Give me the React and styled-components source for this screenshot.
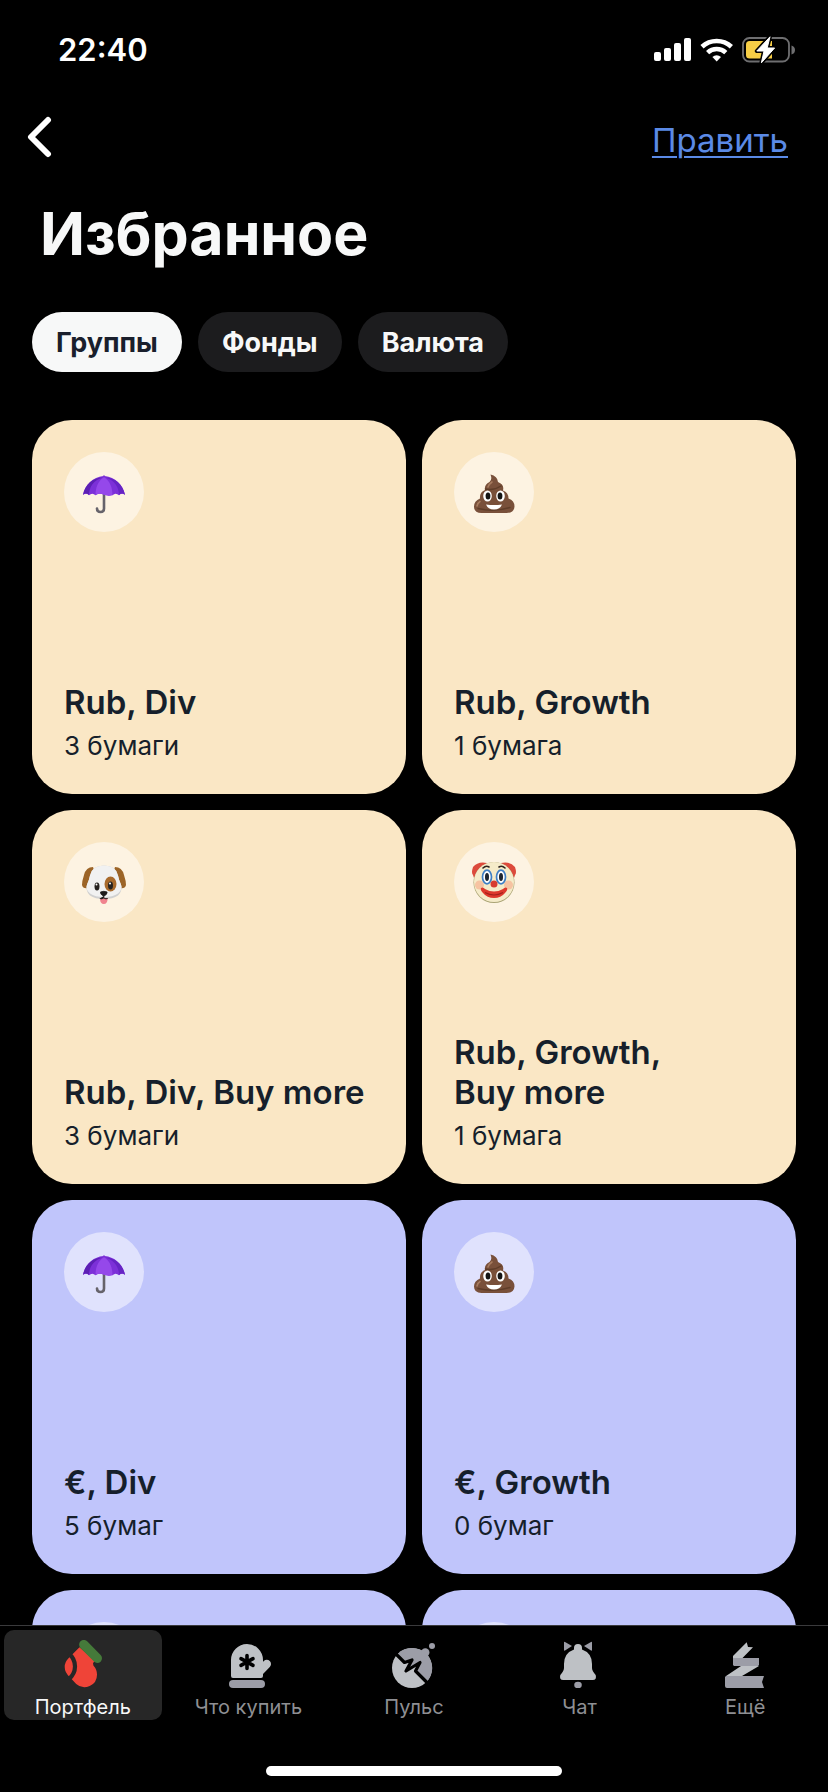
import React, { useState } from 'react'
import styled, { createGlobalStyle } from 'styled-components'

const GlobalStyle = createGlobalStyle`
    * {
        box-sizing: border-box;
    }

    body {
        margin: 0;
        background: #000;
        color: #f7f8f8;
        font-family: Inter, 'Noto Sans', sans-serif;
    }

    button {
        font-family: inherit;
        border: 0;
        padding: 0;
        cursor: pointer;
    }
`;

const Screen = styled.div`
    height: 100vh;
    display: flex;
    flex-direction: column;
    overflow: hidden;
`;

const StatusBar = styled.div`
    height: 88px;
    flex: none;
    display: flex;
    justify-content: space-between;
    padding: 30px 32px 0 58px;
`;

const Time = styled.time`
    font-size: 31px;
    line-height: 40px;
    font-weight: 600;
    color: #fff;
`;

const StatusIcons = styled.div`
    height: 40px;
    display: flex;
    align-items: center;
    gap: 8px;
`;

const NavBar = styled.nav`
    height: 104px;
    flex: none;
    display: flex;
    justify-content: space-between;
    align-items: flex-start;
    padding: 28px 40px 0 24px;
`;

const BackButton = styled.button`
    width: 32px;
    height: 44px;
    background: none;
`;

const EditLink = styled.a`
    font-size: 33px;
    line-height: 48px;
    color: #5b8ae6;
    text-decoration: underline;
    text-decoration-thickness: 2px;
    text-underline-offset: 4px;
`;

const Title = styled.h1`
    flex: none;
    margin: 0;
    padding: 6px 40px 0;
    font-size: 59px;
    line-height: 72px;
    font-weight: 700;
`;

const Chips = styled.div`
    flex: none;
    display: flex;
    gap: 16px;
    padding: 42px 32px 48px;
`;

const Chip = styled.button`
    height: 60px;
    padding: 0 24px;
    border-radius: 30px;
    font-size: 27px;
    font-weight: 700;
    color: ${({ $active }) => ($active ? '#1a1f2c' : '#f7f8f8')};
    background: ${({ $active }) => ($active ? '#f7f8f8' : '#1c1c1e')};
`;

const Scroll = styled.main`
    flex: 1;
    min-height: 0;
    overflow: hidden;
`;

const Grid = styled.div`
    display: grid;
    grid-template-columns: 1fr 1fr;
    gap: 16px;
    padding: 0 32px;
`;

const Card = styled.article`
    aspect-ratio: 1;
    display: flex;
    flex-direction: column;
    justify-content: space-between;
    padding: 32px;
    border-radius: 40px;
    color: #161f2b;
    background: ${({ $color }) => $color};
`;

const Badge = styled.div`
    width: 80px;
    height: 80px;
    padding-top: 4px;
    display: flex;
    align-items: center;
    justify-content: center;
    border-radius: 50%;
    background: rgba(255, 255, 255, 0.5);
`;

const CardTitle = styled.h2`
    margin: 0 0 8px;
    font-size: 33px;
    line-height: 40px;
    font-weight: 600;
`;

const CardText = styled.p`
    margin: 0;
    font-size: 26px;
    line-height: 32px;
`;

const TabBar = styled.footer`
    flex: none;
    border-top: 1px solid #3a3a3c;
    padding: 4px 0 16px;
`;

const Tabs = styled.div`
    display: grid;
    grid-template-columns: repeat(5, 1fr);
`;

const Tab = styled.button`
    height: 90px;
    margin: 0 4px;
    padding: 10px 0 0;
    display: flex;
    flex-direction: column;
    align-items: center;
    border-radius: 10px;
    color: ${({ $active }) => ($active ? '#f7f8f8' : '#8e8f93')};
    background: ${({ $active }) => ($active ? '#272727' : 'none')};
`;

const TabLabel = styled.span`
    margin-top: 8px;
    font-size: 20px;
    line-height: 22px;
`;

const HomeIndicator = styled.div`
    width: 296px;
    height: 10px;
    margin: 46px auto 0;
    border-radius: 5px;
    background: #fff;
`;

const Signal = () => (
    <svg width="38" height="24" viewBox="0 0 38 24" fill="#fff">
        <rect x="0" y="14" width="7" height="9" rx="2" />
        <rect x="10" y="10" width="7" height="13" rx="2" />
        <rect x="20" y="5" width="7" height="18" rx="2" />
        <rect x="30" y="0" width="7" height="23" rx="2" />
    </svg>
)

const Wifi = () => (
    <svg width="34" height="24" viewBox="0 0 34 24" fill="none" stroke="#fff" strokeWidth="4.6">
        <path d="M2 8.8a21.6 21.6 0 0 1 29.4 0" />
        <path d="M7.6 14.6a13.4 13.4 0 0 1 18.2 0" />
        <path d="M16.7 23.4 12.4 19a6.4 6.4 0 0 1 8.6 0z" fill="#fff" stroke="none" />
    </svg>
)

const Battery = () => (
    <svg width="54" height="28" viewBox="0 0 54 28">
        <rect x="1" y="2" width="46" height="23.5" rx="6.5" fill="none" stroke="#6e6e70" strokeWidth="1.8" />
        <path d="M49.5 9.5q3.5 1 3.5 4.5t-3.5 4.5z" fill="#6e6e70" />
        <path d="M7.5 5H30v17.5H7.5Q4 22.5 4 19V8.5Q4 5 7.5 5z" fill="#f7ce46" />
        <path d="M28 .8 14.800 15h7.200l-2.600 11.800L32.600 12h-7.400z" fill="#fff" stroke="#000" strokeWidth="4" strokeLinejoin="round" />
        <path d="M28 .8 14.800 15h7.200l-2.600 11.800L32.600 12h-7.400z" fill="#fff" stroke="#fff" strokeLinejoin="round" />
    </svg>
)

const Umbrella = () => (
    <svg width="48" height="48" viewBox="0 0 48 48">
        <path d="M24 22v16.500q0 3.500-3.400 3.500-3.600 0-3.600-3.500" fill="none" stroke="#66636b" strokeWidth="2.600" strokeLinecap="round" />
        <path d="M23.300 6q.7-2 1.400 0C35 7 43 14.500 45 25q-3-2.600-6 .2-3.400-3-6.500 0-4-2.500-8.500-.4-4.500-2.100-8.500.4-3.100-3-6.500 0-3-2.800-6-.2C5 14.500 13 7 23.300 6z" fill="#7c30d8" />
        <path d="M23.500 7.500C18 11 15.500 18 15.500 25.200q4-2.500 8.500-.4 4.500 2.100 8.500.4C32.500 18 30 11 24.500 7.500z" fill="#9548ea" />
        <path d="M23 7.500C13 10 9 18 9 25q-3-2.800-6-.2C5 14.500 13 7.500 23 7.500z" fill="#5c1fb4" />
        <path d="M25 7.500C35 10 39 18 39 25q3-2.800 6-.2C43 14.500 35 7.500 25 7.500z" fill="#6624c4" />
    </svg>
)

const Poop = () => (
    <svg width="48" height="48" viewBox="0 0 48 48">
        <path d="M20.500 4.500q7 1.500 7.500 7.500 6.500 2.500 5 8.500 5.500 2 5.500 8 6 2 6 8-.5 6.500-8 6.500H11.500q-7.500 0-7.500-6.500 0-5.500 6-8-.5-6.500 5-8.500-1-5.500 4.500-8 3-2 1-7.500z" fill="#79503a" />
        <path d="M15.500 19q8 2 15.500-3M8 38.500q16 4 32-1" fill="none" stroke="#5f3d29" strokeWidth="1.400" strokeLinecap="round" />
        <path d="M22 12q-3 2-4 5M7 36q.5-3 3-4.500" fill="none" stroke="#a77b5e" strokeWidth="1.600" strokeLinecap="round" />
        <ellipse cx="17.500" cy="26" rx="4.300" ry="5.500" fill="#fff" />
        <ellipse cx="30.500" cy="26" rx="4.300" ry="5.500" fill="#fff" />
        <ellipse cx="18" cy="26" rx="2.400" ry="3.500" fill="#141414" />
        <ellipse cx="30" cy="26" rx="2.400" ry="3.500" fill="#141414" />
        <path d="M16 34.500q8 1.200 16 0-2 5-8 5t-8-5z" fill="#fff" />
    </svg>
)

const Dog = () => (
    <svg width="48" height="48" viewBox="0 0 48 48">
        <path d="M13 7Q6 7 4 15q-2 6-2 10 1 4 6 3 5-3 7-15zM35 7q7 0 9 8 2 6 2 10-1 4-6 3-5-3-7-15z" fill="#9c6427" />
        <path d="M24 5.500q12 0 14 10 1 5 3 9 2 6-3 11-5 3.500-14 3.500t-14-3.500q-5-5-3-11 2-4 3-9 2-10 14-10z" fill="#d0d0d0" />
        <path d="M24 5.500q12 0 14 10 1 5 3 9 2 5-3 9-5 3.500-14 3.500t-14-3.500q-5-4-3-9 2-4 3-9 2-10 14-10z" fill="#f1f1f1" />
        <ellipse cx="30.500" cy="24" rx="6" ry="7.500" fill="#a86a2c" />
        <ellipse cx="17" cy="26.500" rx="2.500" ry="4" fill="#26221f" />
        <ellipse cx="30.500" cy="25.500" rx="2.500" ry="4" fill="#26221f" />
        <circle cx="16.500" cy="24.500" r="1" fill="#fff" />
        <circle cx="30" cy="23.500" r="1" fill="#fff" />
        <path d="M20 38q0 6 3.800 6t3.800-6z" fill="#f0838e" />
        <path d="M20.500 32q3.300-1.400 6.600 0 .4 2.500-3.300 4.200-3.700-1.700-3.300-4.200zM23.800 36v2q-2 1.500-4 .5M23.800 38q2 1.500 4 .5" fill="#1c1a1a" stroke="#1c1a1a" strokeWidth=".800" />
    </svg>
)

const Clown = () => (
    <svg width="48" height="48" viewBox="0 0 48 48">
        <path d="M17 3Q8 1 3 7q-2 6 0 8l1 3 14-12zM31 3q9-2 14 4 2 6 0 8l-1 3-14-12z" fill="#dc4a3c" />
        <circle cx="24" cy="22.500" r="20.500" fill="#a9a373" />
        <circle cx="24" cy="22" r="20" fill="#f5ebc9" />
        <circle cx="9.500" cy="25" r="4.500" fill="#f6c3a2" />
        <circle cx="38.500" cy="25" r="4.500" fill="#f6c3a2" />
        <path d="M13 8q3-3 6-1M29 7q3-2 6 1" fill="none" stroke="#2c2320" strokeWidth="1.600" strokeLinecap="round" />
        <ellipse cx="17" cy="17" rx="4.500" ry="6.800" fill="#fff" stroke="#3f7fc4" strokeWidth="1.700" />
        <ellipse cx="31" cy="17" rx="4.500" ry="6.800" fill="#fff" stroke="#3f7fc4" strokeWidth="1.700" />
        <ellipse cx="17" cy="17" rx="2" ry="4" fill="#1c2530" />
        <ellipse cx="31" cy="17" rx="2" ry="4" fill="#1c2530" />
        <circle cx="24" cy="24" r="3.500" fill="#d83b2f" />
        <path d="M11 28q2-1.500 4 1 9 5 18 0 2-2.500 4-1 1 2-2 5-4 5-11 5t-11-5q-3-3-2-5z" fill="#dd382c" />
        <path d="M15 32.500q9 5 18 0" fill="none" stroke="#a3211b" strokeWidth="1.200" />
    </svg>
)

const Stocking = () => (
    <svg width="48" height="48" viewBox="0 0 48 48">
        <path d="M20.500 7.300 9.500 18.300Q5.700 22 5.700 27q0 5.500 5 10l6.500 7a12.500 12.500 0 0 0 20.800-9.500q0-5-3.600-9l-.4-2.500 2-2z" fill="#ef4438" />
        <path d="M9.500 13.500Q16 18.500 16 26.500q0 7.500-6.500 13" fill="none" stroke="#272727" strokeWidth="4.200" />
        <path d="M24.800 4.600 38.300 18.300" stroke="#457a3a" strokeWidth="9.400" strokeLinecap="round" />
    </svg>
)

const Mitten = () => (
    <svg width="48" height="48" viewBox="0 0 48 48">
        <path d="M7 36V20a16 16 0 0 1 32 0v1.500q0 .5.800-.400A4.200 4.200 0 0 1 45.800 27L39 34v2q0 2-2 2H9q-2 0-2-2z" fill="#bec1c5" />
        <rect x="5" y="40" width="36" height="8" rx="4" fill="#9c9da7" />
        <path d="M23 15.500v13M17 18.600l12 6.800M29 18.600l-12 6.800" stroke="#000" strokeWidth="3.600" strokeLinecap="round" />
    </svg>
)

const Pulse = () => (
    <svg width="48" height="48" viewBox="0 0 48 48">
        <circle cx="22" cy="28" r="20" fill="#bec1c5" />
        <path d="M8 13.700A20 20 0 0 1 36.300 42.300L25.500 31l4.500-8.500-14 8.500 5.500-11-7.500 2.500z" fill="#9c9da7" />
        <circle cx="35.300" cy="12.500" r="4.200" fill="#9c9da7" />
        <circle cx="42" cy="6" r="3" fill="#9c9da7" />
        <path d="M5 13l9.500 9.500 7.500-2.500-6 11 14-8.500-4.500 8.500L37.500 43" fill="none" stroke="#000" strokeWidth="3.200" strokeLinejoin="round" />
    </svg>
)

const Bell = () => (
    <svg width="48" height="48" viewBox="0 0 48 48">
        <path d="M18 8q0-4 4-4t4 4v1.500Q36 13 36 24v4q0 3 3.700 7 1.300 5-3 5H7.300q-4.300 0-3-5Q8 31 8 28v-4Q8 13 18 9.500z" fill="#bec1c5" />
        <path d="M8 2.500q0-1 1-.5l7 4-7 4.500q-1 .5-1-.5zM36 2.500q0-1-1-.5l-7 4 7 4.500q1 .5 1-.5z" fill="#9c9da7" />
        <ellipse cx="22" cy="45" rx="3.800" ry="3.300" fill="#9c9da7" />
    </svg>
)

const Ribbon = () => (
    <svg width="48" height="48" viewBox="0 0 48 48">
        <path d="M25.700 2.300 27 7l5 .200L21.500 18H12v-2zM20 26h18L21 36H5z" fill="#bec1c5" />
        <path d="M12 18h26v7l-1 1H13l-1-1zM5 36h38l-2 6 2 6H6q-2 0-2-2v-9z" fill="#9c9da7" />
    </svg>
)

const sand = '#fae7c5';
const lilac = '#c0c5fb';

const groups = [
    { title: 'Rub, Div', text: '3 бумаги', color: sand, Icon: Umbrella },
    { title: 'Rub, Growth', text: '1 бумага', color: sand, Icon: Poop },
    { title: 'Rub, Div, Buy more', text: '3 бумаги', color: sand, Icon: Dog },
    { title: 'Rub, Growth, Buy\u00a0more', text: '1 бумага', color: sand, Icon: Clown },
    { title: '€, Div', text: '5 бумаг', color: lilac, Icon: Umbrella },
    { title: '€, Growth', text: '0 бумаг', color: lilac, Icon: Poop },
    { color: lilac },
    { color: lilac },
]

const tabs = [
    { label: 'Портфель', Icon: Stocking },
    { label: 'Что купить', Icon: Mitten },
    { label: 'Пульс', Icon: Pulse },
    { label: 'Чат', Icon: Bell },
    { label: 'Ещё', Icon: Ribbon },
]

const App = () => {
    const [filter, setFilter] = useState('Группы')
    const [tab, setTab] = useState('Портфель')

    return (
        <Screen>
            <GlobalStyle />
            <StatusBar>
                <Time>22:40</Time>
                <StatusIcons>
                    <Signal />
                    <Wifi />
                    <Battery />
                </StatusIcons>
            </StatusBar>

            <NavBar>
                <BackButton aria-label="Назад">
                    <svg width="32" height="44" viewBox="0 0 32 44" fill="none" stroke="#fff" strokeWidth="6" strokeLinecap="round" strokeLinejoin="round">
                        <path d="M24 4 7 21l17 17" />
                    </svg>
                </BackButton>
                <EditLink href="#edit">Править</EditLink>
            </NavBar>

            <Title>Избранное</Title>

            <Chips>
                {['Группы', 'Фонды', 'Валюта'].map((name) => (
                    <Chip key={name} $active={name === filter} onClick={() => setFilter(name)}>
                        {name}
                    </Chip>
                ))}
            </Chips>

            <Scroll>
                <Grid>
                    {groups.map(({ title, text, color, Icon }, i) => (
                        <Card key={i} $color={color}>
                            <Badge>{Icon && <Icon />}</Badge>
                            {title && (
                                <div>
                                    <CardTitle>{title}</CardTitle>
                                    <CardText>{text}</CardText>
                                </div>
                            )}
                        </Card>
                    ))}
                </Grid>
            </Scroll>

            <TabBar>
                <Tabs>
                    {tabs.map(({ label, Icon }) => (
                        <Tab key={label} $active={label === tab} onClick={() => setTab(label)}>
                            <Icon />
                            <TabLabel>{label}</TabLabel>
                        </Tab>
                    ))}
                </Tabs>
                <HomeIndicator />
            </TabBar>
        </Screen>
    )
}

export default App
